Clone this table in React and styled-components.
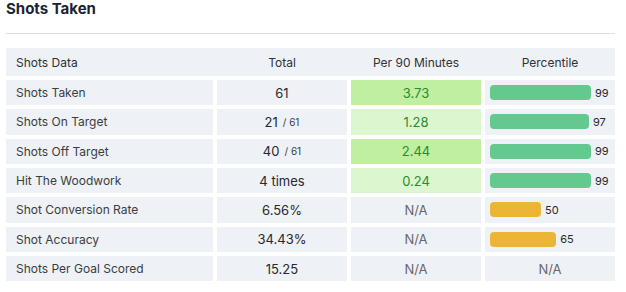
import React from "react";
import styled, { createGlobalStyle } from "styled-components";

const rows = [
  { label: "Shots Taken", total: "61", per90: "3.73", tone: "strong", pct: 99 },
  { label: "Shots On Target", total: "21", of: "61", per90: "1.28", tone: "light", pct: 97 },
  { label: "Shots Off Target", total: "40", of: "61", per90: "2.44", tone: "strong", pct: 99 },
  { label: "Hit The Woodwork", total: "4 times", per90: "0.24", tone: "light", pct: 99 },
  { label: "Shot Conversion Rate", total: "6.56%", per90: null, pct: 50, low: true },
  { label: "Shot Accuracy", total: "34.43%", per90: null, pct: 65, low: true },
  { label: "Shots Per Goal Scored", total: "15.25", per90: null, pct: null },
];

const App = () => {
  return (
    <>
      <GlobalStyle />
      <Wrapper>
        <Title>Shots Taken</Title>
        <Header>
          <HeadCell>Shots Data</HeadCell>
          <HeadCell $center>Total</HeadCell>
          <HeadCell $center>Per 90 Minutes</HeadCell>
          <HeadCell $center>Percentile</HeadCell>
        </Header>
        <Body>
          {rows.map((row) => (
            <React.Fragment key={row.label}>
              <LabelCell>{row.label}</LabelCell>
              <TotalCell>
                {row.total}
                {row.of && <Of>/ {row.of}</Of>}
              </TotalCell>
              {row.per90 ? (
                <Per90Cell $tone={row.tone}>{row.per90}</Per90Cell>
              ) : (
                <NaCell>N/A</NaCell>
              )}
              {row.pct !== null ? (
                <PctCell>
                  <Bar $low={row.low} style={{ width: `${row.pct * 1.02}px` }} />
                  <PctText>{row.pct}</PctText>
                </PctCell>
              ) : (
                <NaCell>N/A</NaCell>
              )}
            </React.Fragment>
          ))}
        </Body>
      </Wrapper>
    </>
  );
};

const GlobalStyle = createGlobalStyle`
  body {
    margin: 0;
    background: #ffffff;
    font-family: Inter, "Noto Sans", sans-serif;
  }
`;

const Wrapper = styled.div`
  width: 609px;
  padding: 0 11px 0 6px;
`;

const Title = styled.h2`
  margin: 0 0 14px;
  padding-bottom: 15px;
  font-size: 15px;
  line-height: 18px;
  font-weight: 700;
  color: #1c2434;
  border-bottom: 1px solid #dcdfe4;
`;

const columns = "207px 130px 130px 130px";

const Header = styled.div`
  display: grid;
  grid-template-columns: ${columns};
  column-gap: 4px;
  height: 28px;
  background: #eef1f5;
  margin-bottom: 4px;
`;

const HeadCell = styled.div`
  display: flex;
  align-items: center;
  justify-content: ${(p) => (p.$center ? "center" : "flex-start")};
  padding-left: ${(p) => (p.$center ? "0" : "10px")};
  font-size: 12px;
  color: #2f3237;
`;

const Body = styled.div`
  display: grid;
  grid-template-columns: ${columns};
  grid-auto-rows: 25.33px;
  gap: 4px;
`;

const Cell = styled.div`
  display: flex;
  align-items: center;
  background: #eef1f5;
`;

const LabelCell = styled(Cell)`
  padding-left: 10px;
  font-size: 12px;
  color: #3a3d42;
`;

const TotalCell = styled(Cell)`
  justify-content: center;
  font-size: 13px;
  color: #26292e;
`;

const Of = styled.span`
  font-size: 10px;
  margin-left: 5px;
  color: #3a3d42;
`;

const Per90Cell = styled(Cell)`
  justify-content: center;
  font-size: 13px;
  color: #2b8a30;
  background: ${(p) => (p.$tone === "strong" ? "#c0efa0" : "#dcf7cf")};
`;

const NaCell = styled(Cell)`
  justify-content: center;
  font-size: 13px;
  color: #65686d;
`;

const PctCell = styled(Cell)`
  padding-left: 5px;
  gap: 4px;
`;

const Bar = styled.div`
  height: 15px;
  border-radius: 4px;
  background: ${(p) => (p.$low ? "#ecb535" : "#64c98e")};
`;

const PctText = styled.span`
  font-size: 11px;
  color: #26292e;
`;

export default App;
